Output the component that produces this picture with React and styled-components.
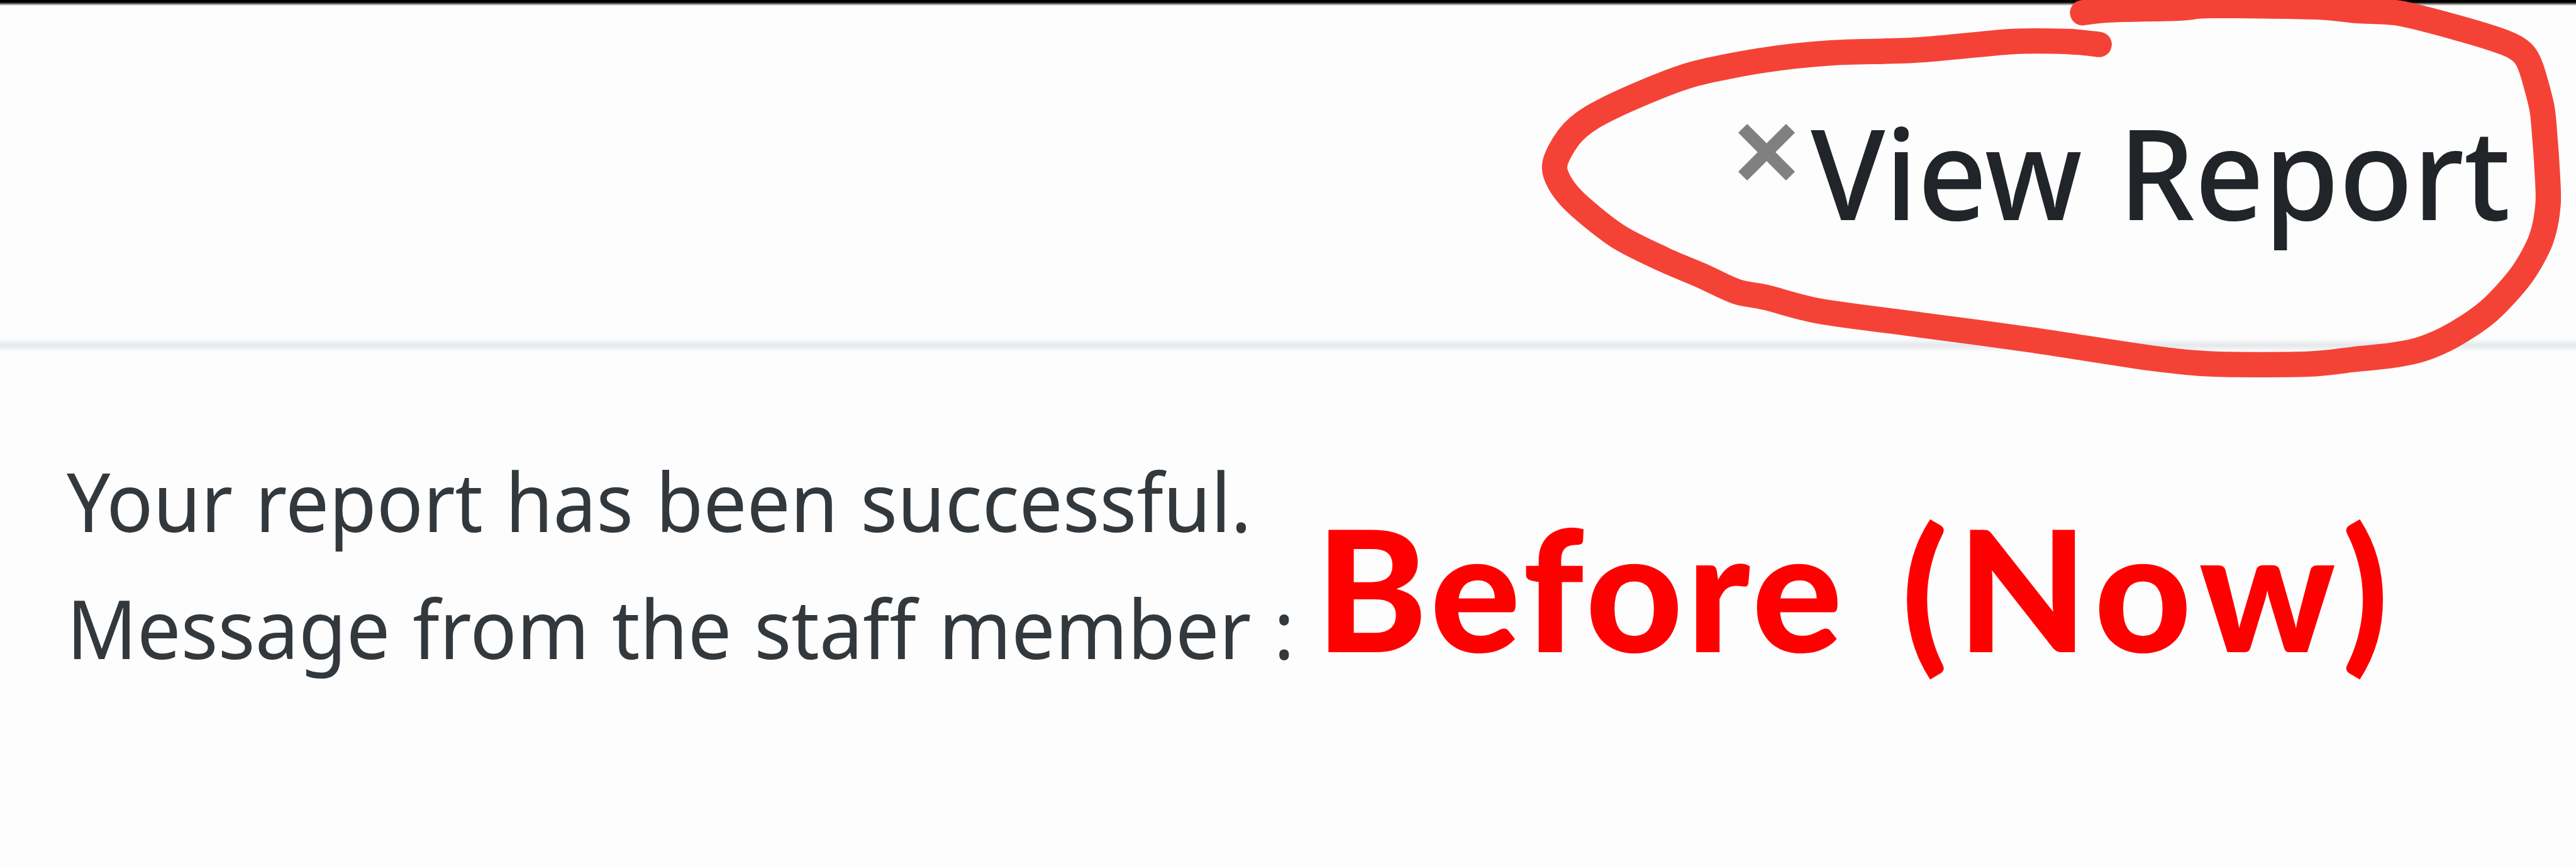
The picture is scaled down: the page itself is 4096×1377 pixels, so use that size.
import React from 'react'
import styled, { createGlobalStyle } from 'styled-components'

const paper = '#fdfdfd'
const ink = '#212529'
const marker = '#f44336'

const GlobalStyle = createGlobalStyle`
  body {
    margin: 0;
    background: ${paper};
  }
`

const Modal = styled.div`
  position: relative;
  width: 4096px;
  height: 1377px;
  overflow: hidden;
  background: ${paper};
  font-family: 'Noto Sans', 'Open Sans', sans-serif;
`

const TopEdge = styled.div`
  height: 9px;
  background: linear-gradient(#000 3.5px, ${paper} 9px);
`

const Header = styled.header`
  display: flex;
  justify-content: flex-end;
  align-items: flex-start;
  box-sizing: border-box;
  height: 529px;
  padding: 143px 104px 0 0;
`

const Close = styled.button`
  display: flex;
  margin: 44px -27px 0 0;
  padding: 0;
  border: 0;
  background: none;

  svg {
    width: 92px;
    height: 92px;
  }
`

const Title = styled.h5`
  margin: 0;
  color: ${ink};
  font-size: 201px;
  font-weight: 500;
  line-height: 240px;
  word-spacing: 8px;
  white-space: nowrap;
  transform: scaleX(0.956);
  transform-origin: right;
`

const Divider = styled.div`
  height: 22px;
  background: linear-gradient(${paper}, #e4e8eb, ${paper});
`

const Body = styled.main`
  display: flex;
  align-items: flex-start;
  padding: 135px 0 0 106px;
`

const Message = styled.div`
  width: 1986px;
`

const Line = styled.p`
  margin: 0;
  color: #33383c;
  font-size: 130px;
  line-height: 201.5px;
  word-spacing: 4px;
  white-space: nowrap;
  transform: scaleX(${props => props.stretch});
  transform-origin: left;
`

const Label = styled.div`
  display: flex;
  gap: 88px;
  margin-top: 88px;
  color: #f00;
  font-family: Lato, sans-serif;
  font-size: 268px;
  font-weight: 900;
  line-height: 300px;
`

const Word = styled.span`
  letter-spacing: ${props => props.spacing}px;
`

const Scribble = styled.svg`
  position: absolute;
  top: 0;
  left: 0;
  width: 4096px;
  height: 1377px;
  pointer-events: none;
`

const stroke = [
  [4965, 105], [4891, 98], [4761, 98], [4537, 118], [4330, 125], [4172, 142],
  [4006, 175], [3880, 222], [3766, 277], [3710, 325], [3677, 396], [3714, 466],
  [3824, 557], [3936, 614], [4023, 651], [4106, 689], [4180, 704], [4305, 736],
  [4540, 768], [4800, 803], [5089, 847], [5237, 861], [5460, 861], [5567, 850],
  [5660, 840], [5727, 826], [5800, 794], [5887, 735], [5963, 652], [6010, 567],
  [6027, 482], [6024, 390], [6019, 321], [6012, 253], [5987, 161], [5967, 125],
  [5926, 101], [5814, 66], [5674, 31], [5575, 25], [5476, 16], [5229, 13],
  [5155, 19], [4990, 23], [4926, 30]
]

// Catmull-Rom through the pen points
const smooth = pts =>
  pts.slice(1).reduce((d, p, i) => {
    const a = pts[i - 1] || pts[i]
    const b = pts[i]
    const c = pts[i + 2] || p
    const x1 = b[0] + (p[0] - a[0]) / 7
    const y1 = b[1] + (p[1] - a[1]) / 7
    const x2 = p[0] - (c[0] - b[0]) / 7
    const y2 = p[1] - (c[1] - b[1]) / 7
    return `${d} C${x1} ${y1} ${x2} ${y2} ${p[0]} ${p[1]}`
  }, `M${pts[0][0]} ${pts[0][1]}`)

const CloseIcon = () => (
  <svg viewBox="0 0 92 92">
    <path d="M8 8 84 84M84 8 8 84" stroke="#808080" strokeWidth="20" fill="none" />
  </svg>
)

export default function App() {
  return (
    <Modal>
      <GlobalStyle />
      <TopEdge />
      <Header>
        <Close aria-label="Close">
          <CloseIcon />
        </Close>
        <Title>View Report</Title>
      </Header>
      <Divider />
      <Body>
        <Message>
          <Line stretch={0.944}>Your report has been successful.</Line>
          <Line stretch={0.949}>Message from the staff member :</Line>
        </Message>
        <Label>
          <Word spacing={6}>Before</Word>
          <Word spacing={14.5}>(Now)</Word>
        </Label>
      </Body>
      <Scribble viewBox="0 0 6093 2048">
        <path
          d={smooth(stroke)}
          fill="none"
          stroke={marker}
          strokeWidth="60"
          strokeLinecap="round"
          strokeLinejoin="round"
        />
      </Scribble>
    </Modal>
  )
}
